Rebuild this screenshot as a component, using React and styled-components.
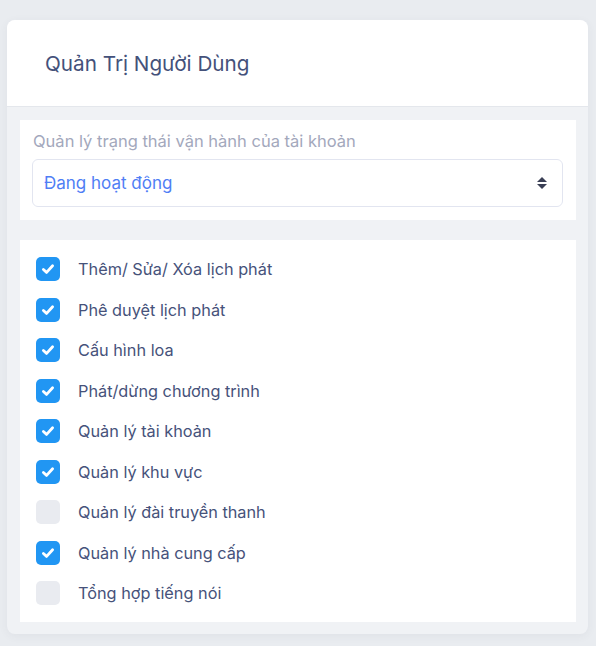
import React, { useState } from "react";
import styled, { createGlobalStyle } from "styled-components";

const GlobalStyle = createGlobalStyle`
  html, body {
    margin: 0;
    padding: 0;
    background: #e9ecf0;
    font-family: Inter, "Noto Sans", sans-serif;
  }
`;

const permissions = [
  { label: "Thêm/ Sửa/ Xóa lịch phát", checked: true },
  { label: "Phê duyệt lịch phát", checked: true },
  { label: "Cấu hình loa", checked: true },
  { label: "Phát/dừng chương trình", checked: true },
  { label: "Quản lý tài khoản", checked: true },
  { label: "Quản lý khu vực", checked: true },
  { label: "Quản lý đài truyền thanh", checked: false },
  { label: "Quản lý nhà cung cấp", checked: true },
  { label: "Tổng hợp tiếng nói", checked: false },
];

function App() {
  const [items, setItems] = useState(permissions);

  const toggle = (i) => {
    setItems(items.map((it, idx) => (idx === i ? { ...it, checked: !it.checked } : it)));
  };

  return (
    <Page>
      <GlobalStyle />
      <Card>
        <Header>
          <Title>Quản Trị Người Dùng</Title>
        </Header>
        <Body>
          <Panel>
            <Label>Quản lý trạng thái vận hành của tài khoản</Label>
            <SelectBox>
              <span>Đang hoạt động</span>
              <svg width="12" height="16" viewBox="0 0 12 16">
                <path d="M6 2 L11 7 H1 Z" fill="#3a3f55" />
                <path d="M6 14 L11 9 H1 Z" fill="#3a3f55" />
              </svg>
            </SelectBox>
          </Panel>
          <List>
            {items.map((it, i) => (
              <Row key={it.label} onClick={() => toggle(i)}>
                <Box $checked={it.checked}>
                  {it.checked && (
                    <svg width="14" height="14" viewBox="0 0 14 14">
                      <path
                        d="M2.4 7.5 L5.6 10.4 L11.6 3.8"
                        fill="none"
                        stroke="#fff"
                        strokeWidth="2.8"
                        strokeLinecap="round"
                        strokeLinejoin="round"
                      />
                    </svg>
                  )}
                </Box>
                <RowText>{it.label}</RowText>
              </Row>
            ))}
          </List>
        </Body>
      </Card>
    </Page>
  );
}

const Page = styled.div`
  padding: 20px 8px 12px 7px;
`;

const Card = styled.div`
  width: 581px;
  border-radius: 8px;
  overflow: hidden;
  background: #f0f2f5;
  box-shadow: 0 2px 10px rgba(60, 70, 90, 0.06);
`;

const Header = styled.div`
  height: 87px;
  background: #fff;
  border-bottom: 1px solid #e4e7ec;
  display: flex;
  align-items: center;
  padding-left: 38px;
  box-sizing: border-box;
`;

const Title = styled.h1`
  margin: 0;
  font-size: 20.7px;
  font-weight: 400;
  color: #44517a;
`;

const Body = styled.div`
  padding: 13px 12px 12px 13px;
  display: flex;
  flex-direction: column;
  gap: 20px;
`;

const Panel = styled.div`
  background: #fff;
  padding: 11px 13px 13px 12px;
  display: flex;
  flex-direction: column;
  gap: 8px;
`;

const Label = styled.div`
  font-size: 16.5px;
  color: #a3a8bc;
  line-height: 20px;
  padding-left: 1px;
`;

const SelectBox = styled.div`
  height: 48px;
  border: 1px solid #e2e5f0;
  border-radius: 6px;
  box-sizing: border-box;
  display: flex;
  align-items: center;
  justify-content: space-between;
  padding: 0 14px 0 11px;
  font-size: 17px;
  color: #4f7ef5;
`;

const List = styled.div`
  background: #fff;
  padding: 9px 16px 8px;
  display: flex;
  flex-direction: column;
`;

const Row = styled.label`
  display: flex;
  align-items: center;
  gap: 18px;
  height: 40.5px;
  cursor: pointer;
`;

const Box = styled.span`
  width: 24px;
  height: 24px;
  border-radius: 5px;
  display: flex;
  align-items: center;
  justify-content: center;
  background: ${(p) => (p.$checked ? "#2196f3" : "#e9ebf0")};
`;

const RowText = styled.span`
  font-size: 16.3px;
  color: #46527a;
`;

export default App;
